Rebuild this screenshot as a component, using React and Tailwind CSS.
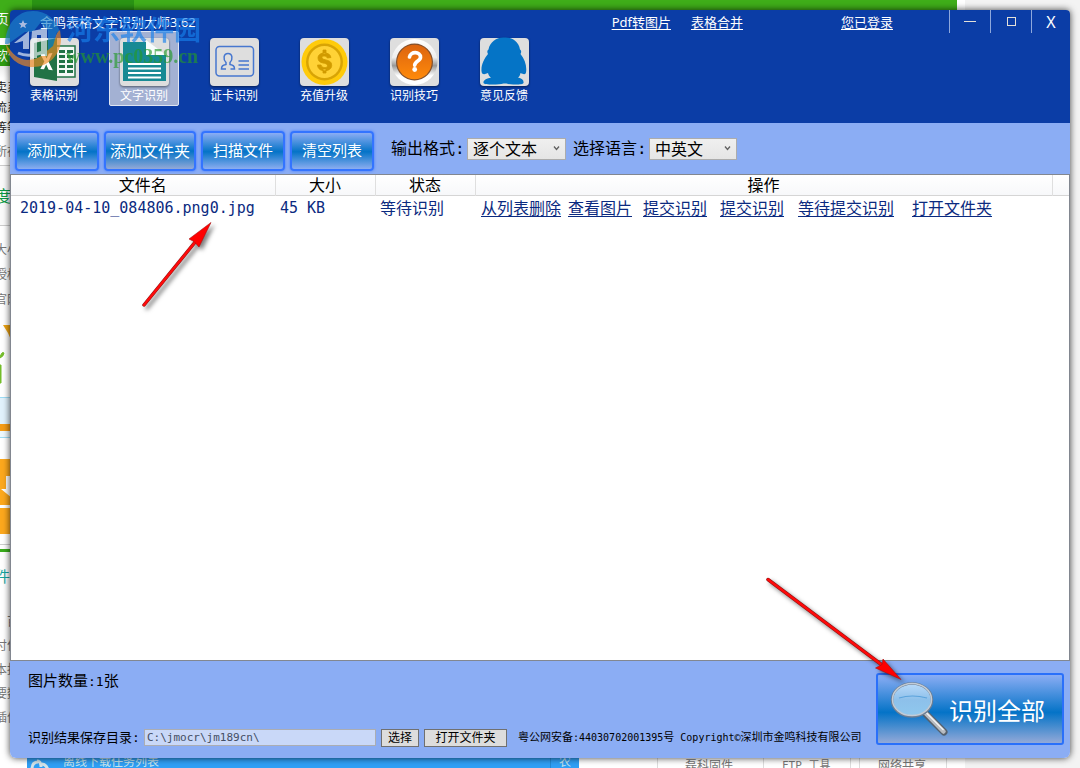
import React from "react";

const SANS = "font-['Noto_Sans','Noto_Sans_CJK_SC',sans-serif]";
const MONO = "font-['DejaVu_Sans_Mono','Noto_Sans_CJK_SC',monospace]";

function IconTile({ children }) {
  return (
    <svg viewBox="0 0 49 48" className="h-12 w-[49px] shrink-0 overflow-visible drop-shadow-[0_1px_1px_rgba(0,0,0,0.5)]" aria-hidden="true">
      <rect x="0" y="0" width="49" height="48" rx="4" fill="#dedede" />
      {children}
    </svg>
  );
}

function ExcelIcon() {
  return (
    <IconTile>
      <rect x="26" y="8" width="19" height="31" fill="#f4f8f5" stroke="#217346" strokeWidth="1.5" />
      {[12, 17, 22, 27, 32].map((y) => (
        <g key={y} fill="#217346">
          <rect x="29" y={y} width="6" height="3" />
          <rect x="37" y={y} width="6" height="3" />
        </g>
      ))}
      <path d="M4 5 27 0V43L4 39Z" fill="#217346" />
      <path d="M10.500 16.500l4-.5 2 4.500 2.300-5 3.700-.4-4 8.400 4.300 8.700-4.200-.4-2.400-5.400-2.200 4.900-3.700-.4 4-7.500z" fill="#fff" />
    </IconTile>
  );
}

function DocumentIcon() {
  return (
    <IconTile>
      <path d="M3 4H26V17H46V43H3Z" fill="#188a94" />
      <path d="M26 2 46 17H26Z" fill="#f8fdfd" />
      <path d="M8 26H41M8 30.500H41M8 35H41M8 39.500H41" stroke="#fff" strokeWidth="2" />
    </IconTile>
  );
}

function CardIcon() {
  return (
    <IconTile>
      <g fill="none" stroke="#4777cf" strokeWidth="1.500">
        <rect x="6" y="8.500" width="37.500" height="29.500" rx="3.500" />
        <path d="M16 31h-4.500c0-3 1.200-3.700 4.500-4.500v-2c-3-3-2.700-9 2-9s5 6 2 9v2c3.300.8 4.500 1.500 4.500 4.500h-4" />
        <path d="M28.500 23H39M28.500 27H39M28.500 31H39" />
      </g>
    </IconTile>
  );
}

function CoinIcon() {
  return (
    <IconTile>
      <circle cx="24.500" cy="24" r="23" fill="#ffcb0b" />
      <circle cx="24.500" cy="24" r="18.500" fill="#d8a405" />
      <circle cx="24.500" cy="24" r="16" fill="#ffd236" />
      <path d="M31 19.500c-.7-3.200-3-4.500-6.500-4.500s-6.500 1.700-6.500 5c0 6.800 9.500 3.800 9.500 7.700 0 2.700-5.800 2.500-6.500-.7h-3.500c.3 4 3.200 5.700 7 5.700 4.200 0 7.200-1.900 7.200-5.500 0-6.700-9.700-4.200-9.700-7.700 0-2 4.700-2 5.300.5zM23 12h3v4h-3zM23 31h3v4h-3z" fill="#d19b00" stroke="#d19b00" strokeWidth=".8" />
    </IconTile>
  );
}

function HelpIcon() {
  return (
    <IconTile>
      <defs>
        <linearGradient id="help-ring" x1="0" x2="0" y1="0" y2="1">
          <stop offset="0" stopColor="#fff" />
          <stop offset=".4" stopColor="#eee" />
          <stop offset=".58" stopColor="#999" />
          <stop offset=".8" stopColor="#fff" />
        </linearGradient>
        <linearGradient id="help-face" x1="0" x2="0" y1="0" y2="1">
          <stop offset="0" stopColor="#dc6410" />
          <stop offset="1" stopColor="#ff8a0a" />
        </linearGradient>
      </defs>
      <circle cx="24.500" cy="24" r="23" fill="url(#help-ring)" />
      <circle cx="24.500" cy="24" r="18.500" fill="#83502c" />
      <circle cx="24.500" cy="24" r="17.300" fill="url(#help-face)" />
      <path d="M19.500 19c1-6 11-5.500 11 .2 0 4-5.500 3.600-5.800 8" fill="none" stroke="#fff" strokeWidth="3.700" strokeLinecap="round" />
      <circle cx="24.700" cy="31.500" r="2.400" fill="#fff" />
    </IconTile>
  );
}

function PenguinIcon() {
  return (
    <IconTile>
      <path d="M24.500-.5C17-1 10 3.500 8.500 11.500c-1.500 1-1.500 3-.5 4.500C4 21 1 27 1.500 33c.2 3.500 2.500 4 6.500 2 .5 2 1.500 3.500 3 4.500-4 1-8 2.500-7.500 5.500.5 2 15 2 20 .5h3c5 1.500 16.500 1.500 17-.5.500-3-1.500-4.500-5.500-5.500 1.500-1 2-2.500 2.500-4.500 4 2 5.500 1.500 5.700-2 .5-6-1.700-12-5.700-17 1-1.500 1-3.500-.5-4.500C39 3.500 32-1 24.500-.5Z" fill="#0574c6" />
    </IconTile>
  );
}

const TOOLS = [
  { label: "表格识别", Icon: ExcelIcon },
  { label: "文字识别", Icon: DocumentIcon, active: true },
  { label: "证卡识别", Icon: CardIcon },
  { label: "充值升级", Icon: CoinIcon },
  { label: "识别技巧", Icon: HelpIcon },
  { label: "意见反馈", Icon: PenguinIcon },
];

function Header() {
  return (
    <header className="h-[113px] shrink-0 rounded-t-[4px] bg-[#0b3da6] text-white">
      <div className="flex h-[21px] items-start text-[13px] leading-6">
        <h1 className="flex-1 pl-[30px] text-[13px] font-normal">金鸣表格文字识别大师3.62</h1>
        <nav className="flex">
          <a href="#pdf" className="mr-5 underline underline-offset-2">Pdf转图片</a>
          <a href="#merge" className="mr-[98px] underline underline-offset-2">表格合并</a>
          <a href="#account" className="mr-14 underline underline-offset-2">您已登录</a>
        </nav>
        <div className="flex h-[23px] shrink-0">
          <button aria-label="最小化" className="flex w-[41px] items-center justify-center border-l border-[#8ea8dc]">
            <span className="h-px w-3 bg-[#e4e0d8]" />
          </button>
          <button aria-label="最大化" className="flex w-[41px] items-center justify-center border-l border-[#8ea8dc]">
            <span className="size-[9px] border border-[#e4e0d8]" />
          </button>
          <button aria-label="关闭" className="w-[39px] border-l border-[#8ea8dc] text-[16px] leading-6">X</button>
        </div>
      </div>
      <div className="flex gap-5 pl-[9px]">
        {TOOLS.map(({ label, Icon, active }) => (
          <button
            key={label}
            className={
              active
                ? "flex h-[75px] w-[70px] flex-col items-center rounded-[2px] border border-[#dfe5f2] bg-[#a3b1d3] pt-1.5 text-[12px] leading-5"
                : "flex h-[75px] w-[70px] flex-col items-center border border-transparent pt-1.5 text-[12px] leading-5"
            }
          >
            <Icon />
            {label}
          </button>
        ))}
      </div>
    </header>
  );
}

function Toolbar() {
  const glossy = "h-10 rounded-[4px] border-2 border-[#3374ff] text-white shadow-[0_0_3px_#3c78ff]";
  return (
    <div className="flex h-[51px] shrink-0 items-center bg-[#8badf4] pl-[5px] text-[16px]">
      <div className="flex gap-[5px] pt-1 text-[15px]">
        <button className={`${glossy} w-[84px] bg-[linear-gradient(#8badf4,#0473c7_52%,#8badf0)]`}>添加文件</button>
        <button className={`${glossy} w-[92px] bg-[linear-gradient(#8badf4,#0473c7_50%,#93a9d8)] text-[16px]`}>添加文件夹</button>
        <button className={`${glossy} w-[84px] bg-[linear-gradient(#8badf4,#0473c7_52%,#8badf0)]`}>扫描文件</button>
        <button className={`${glossy} w-[84px] bg-[linear-gradient(#8badf4,#0473c7_52%,#8badf0)]`}>清空列表</button>
      </div>
      <Picker id="format" label="输出格式" value="逐个文本" width="w-[99px]" />
      <Picker id="language" label="选择语言" value="中英文" width="w-[88px]" narrow />
    </div>
  );
}

function Picker({ id, label, value, width, narrow }) {
  return (
    <div className={narrow ? "flex items-center pl-[7px]" : "flex items-center pl-[17px]"}>
      <label htmlFor={id} className="w-[76px] whitespace-nowrap text-black">
        {label}<span className={MONO}>:</span>
      </label>
      <div className="relative">
        <select id={id} className={`${width} block h-[22px] appearance-none border border-[#acacac] bg-linear-to-b from-[#efefef] to-[#e5e5e5] pl-[5px] text-[16px] leading-5 text-black`}>
          <option>{value}</option>
        </select>
        <svg viewBox="0 0 7 5" className="pointer-events-none absolute top-2 right-1.5 h-[5px] w-[7px]" aria-hidden="true">
          <path d="M1 .5 3.500 3.500 6 .5" fill="none" stroke="#606060" strokeWidth="1.300" />
        </svg>
      </div>
    </div>
  );
}

const ACTIONS = ["从列表删除", "查看图片", "提交识别", "提交识别", "等待提交识别", "打开文件夹"];

function FileTable() {
  const head = "h-5 border-r border-[#dfdfdf] p-0 text-center font-normal";
  return (
    <main className="min-h-0 flex-1 border border-[#828790] bg-white">
      <table className="w-full table-fixed border-collapse text-[16px] leading-5 text-black">
        <colgroup>
          <col className="w-[264px]" />
          <col className="w-[100px]" />
          <col className="w-[100px]" />
          <col />
          <col className="w-[17px]" />
        </colgroup>
        <thead>
          <tr className="border-b border-[#d5d5d5] bg-linear-to-b from-white to-[#f7f8fa]">
            <th className={head}>文件名</th>
            <th className={head}>大小</th>
            <th className={head}>状态</th>
            <th className={head}>操作</th>
            <th className="p-0" aria-label="空列" />
          </tr>
        </thead>
        <tbody className="text-[#0b2a80]">
          <tr className="h-6">
            <td className={`${MONO} p-0 pl-[9px] text-[15px]`}>2019-04-10_084806.png0.jpg</td>
            <td className={`${MONO} p-0 pl-[5px] text-[15px]`}>45 KB</td>
            <td className="p-0 pl-[5px]">等待识别</td>
            <td className="p-0 pl-1.5" colSpan={2}>
              <div className="grid grid-cols-[87px_75px_77px_78px_114px_80px]">
                {ACTIONS.map((text, i) => (
                  <a key={i} href="#action" className="whitespace-nowrap underline underline-offset-2">{text}</a>
                ))}
              </div>
            </td>
          </tr>
        </tbody>
      </table>
    </main>
  );
}

function Magnifier() {
  return (
    <svg viewBox="0 0 60 58" className="h-[58px] w-[60px] shrink-0" aria-hidden="true">
      <defs>
        <linearGradient id="lens" x1="0" x2="0" y1="0" y2="1">
          <stop offset="0" stopColor="#b9dafa" />
          <stop offset=".5" stopColor="#8dc0ea" />
          <stop offset="1" stopColor="#8fc9ee" />
        </linearGradient>
      </defs>
      <path d="M37 34 55 52" stroke="#55606c" strokeWidth="7" strokeLinecap="round" />
      <path d="M36.500 33 54.500 51.500" stroke="#b7bbc0" strokeWidth="4.500" strokeLinecap="round" />
      <path d="M37.500 33 54.500 50" stroke="#f5f5f5" strokeWidth="1.300" />
      <ellipse cx="23" cy="20" rx="20" ry="16.500" fill="url(#lens)" stroke="#6d7f94" strokeWidth="2.500" />
      <ellipse cx="23" cy="19.500" rx="19.500" ry="16" fill="none" stroke="#c3ccd6" strokeWidth="1.500" />
      <path d="M10 18q13-4 28 0" fill="none" stroke="#5ba3dc" strokeWidth="1.200" />
    </svg>
  );
}

function Footer() {
  const plain = "h-[18px] border border-[#707070] bg-[#dddddd] text-[12px] leading-4";
  return (
    <footer className="flex h-[97px] shrink-0 rounded-b-[6px] bg-[#8badf4] text-black">
      <div className="flex min-w-0 flex-1 flex-col justify-between pt-[7px] pb-2 pl-[18px]">
        <p className="text-[15px] leading-6">
          图片数量<span className={`${MONO} text-[13px]`}>:1</span>张
        </p>
        <div className="flex items-center whitespace-nowrap text-[13px] leading-6">
          <label htmlFor="folder" className="w-[116px]">识别结果保存目录<span className={MONO}>:</span></label>
          <input id="folder" defaultValue="C:\jmocr\jm189cn\" className={`${MONO} h-[17px] w-[232px] border border-[#abadb3] bg-[#c9d8f8] pl-0.5 text-[11px] text-[#444e64]`} />
          <button className={`${plain} ml-[5px] w-[38px]`}>选择</button>
          <button className={`${plain} ml-[5px] w-[83px]`}>打开文件夹</button>
          <p className="pl-[11px] text-[11px]">
            粤公网安备<span className={`${MONO} text-[10px]`}>:44030702001395</span>号
            <span className={`${MONO} text-[10px] whitespace-pre`}> Copyright©</span>深圳市金鸣科技有限公司
          </p>
        </div>
      </div>
      <button className="mt-3 mr-1.5 flex h-[72px] w-[188px] shrink-0 items-center rounded-[3px] border-2 border-[#2a70fa] bg-[linear-gradient(#8badf4,#0473c7_55%,#93a9d8)] pl-[11px] text-[24px] text-white">
        <Magnifier />
        <span className="whitespace-nowrap pt-1">识别全部</span>
      </button>
    </footer>
  );
}

const SIDE_ROWS = [
  { box: "h-[38px] bg-[#3fae19] pt-[9px] text-[14px] text-white", text: "页" },
  { box: "h-[7px] bg-white" },
  { box: "h-[21px] bg-[#2f9d12] text-[13px] text-white", text: "软件" },
  { box: "h-[12px] bg-linear-to-b from-[#ededed] to-white" },
  { box: "h-5 text-[12px] text-[#222]", text: "卖系" },
  { box: "h-5 text-[12px] text-[#222]", text: "流系" },
  { box: "h-6 text-[12px] text-[#222]", text: "等等" },
  { box: "h-6 border-b border-[#ccc] text-[12px] text-[#777]", text: "所在" },
  { box: "h-[60px] border-b border-[#ccc] bg-[#fafafa] pt-5 text-[16px] text-[#0b9a45]", text: "度网" },
  { box: "h-[14px]" },
  { box: "h-[25px] text-[12px] text-[#777]", text: "大小" },
  { box: "h-[25px] text-[12px] text-[#777]", text: "授权" },
  { box: "h-[25px] text-[12px] text-[#777]", text: "官网" },
];

const LOWER_ROWS = [
  { box: "h-[27px] border-t border-[#9ddcf5] bg-[#e1f2fc]" },
  { box: "h-[7px] bg-[#f59c16]" },
  { box: "h-[7px] border-b border-[#9ddcf5] bg-[#eef8fd]" },
  { box: "h-[18px]" },
];

function SideRow({ box, text }) {
  return (
    <div className={`${box} shrink-0 leading-5`}>
      {text && <span className="-ml-[5px] block whitespace-nowrap">{text}</span>}
    </div>
  );
}

function Backdrop() {
  return (
    <div className="absolute inset-0 flex overflow-hidden bg-[#f3f3f3]" aria-hidden="true">
      <div className="flex w-[965px] flex-col bg-white">
        <div className="flex flex-1 items-start">
          <div className="flex w-8 shrink-0 flex-col">
            {SIDE_ROWS.map((row, i) => <SideRow key={i} {...row} />)}
            <svg viewBox="0 0 12 82" className="h-[82px] w-3 shrink-0">
              <path d="M3 10h9v17l-4-9z" fill="#eda313" />
              <path d="M0 42q2-6 4-4 0 3-4 5zM0 50h1v18h-1z" fill="#75bd2b" stroke="#75bd2b" />
            </svg>
            {LOWER_ROWS.map((row, i) => <SideRow key={i} {...row} />)}
            <svg viewBox="0 0 12 78" className="h-[78px] w-3 shrink-0">
              <path d="M0 3h12v75H0z" fill="#fca81d" />
              <path d="M0 49h12v3H0zM6 20h6v22L1 33h5z" fill="#fff" />
            </svg>
            <div className="h-[18px] shrink-0 border-b-[3px] border-[#3aad1c] pt-[10px]"><div className="h-px bg-[#ccc]" /></div>
            <SideRow box="h-[60px] pt-[14px] text-[15px] text-[#16a5a0]" text="件" />
            <SideRow box="h-6 pl-3 text-[12px] text-[#777]" text="百" />
            <SideRow box="h-6 text-[12px] text-[#777]" text="付作" />
            <SideRow box="h-6 text-[12px] text-[#777]" text="本报" />
            <SideRow box="h-6 text-[12px] text-[#777]" text="要数" />
            <SideRow box="h-6 text-[12px] text-[#777]" text="插件" />
          </div>
          <div className="h-[38px] w-[102px] bg-[#2a9414]" />
          <div className="mr-2 h-[38px] flex-1 bg-[#3fae19]" />
        </div>
      </div>
      <div className="absolute bottom-0 left-[27px] flex h-3 text-[12px] leading-4 text-[#777]">
        <div className="flex h-3 w-[552px] shrink-0 items-center gap-3 overflow-hidden bg-[#2f9ff5] text-[#c8e6ee]">
          <svg viewBox="0 0 24 12" className="h-3 w-6">
            <path d="M5 13q0-7 6-7M10 5q4 0 4 6M15 8q4 0 6 6" fill="none" stroke="#d4e4ea" strokeWidth="3" />
          </svg>
          <span className="flex-1">离线下载任务列表</span>
          <span className="border-l border-[#2389d4] px-2">农</span>
        </div>
        <div className="ml-[68px] flex h-3 gap-2 pl-2.5 leading-5">
          <span className="w-[98px] border-l border-[#ddd] pl-[27px] whitespace-nowrap">磊科固件</span>
          <span className={`${MONO} w-[88px] border-x border-[#ddd] pl-[18px] text-[11px] whitespace-nowrap`}>FTP 工具</span>
          <span className="w-[88px] border-x border-[#ddd] pl-[18px] whitespace-nowrap">网络共享</span>
        </div>
      </div>
    </div>
  );
}

function Watermark() {
  return (
    <div className="pointer-events-none absolute top-[10px] left-[5px] flex opacity-65">
      <svg viewBox="0 0 58 58" className="h-[58px] w-[58px]" aria-hidden="true">
        <path d="M0 34C1 14 12 1 28 1c13 0 24 8 27 22L42 20 36 12 28 22H20L3 34Z" fill="#1c82cc" />
        <path d="M1 34c1 13 12 23 27 23 16 0 28-13 28-28l-1-9c-5 4-5 10-10 17-6 9-14 13-23 13-9-1-15-6-21-16z" fill="#f28b20" />
        <path d="M9 33 24 21v18h-6v-8l-7 2zM27 21l15-3v28h-6V25h-4v23h-6V33z" fill="#f0f5f9" />
        <path d="M13 43q11 5 25-1" fill="none" stroke="#f0f5f9" strokeWidth="3" />
        <path d="M43 18l9 4-4 14-5 4z" fill="#1c82cc" />
        <path d="m18 10 1.300 3 3.200.2-2.500 2 1 3-3-1.700-2.700 1.700.8-3-2.400-2 3-.2z" fill="#fff" />
      </svg>
      <div className="flex flex-col pl-[3px]">
        <span className="text-[27px] leading-[40px] font-bold whitespace-nowrap text-[#1680ec]">河东软件园</span>
        <span className="-mt-1 font-['Liberation_Serif',serif] text-[20px] leading-5 font-bold text-[#259a2a]">www.pc0359.cn</span>
      </div>
    </div>
  );
}

function Arrows() {
  return (
    <>
      <svg viewBox="140 218 76 92" className="pointer-events-none absolute top-[218px] left-[140px] h-[92px] w-[76px] overflow-visible drop-shadow-[3px_3px_2px_rgba(0,0,0,0.5)]" aria-hidden="true">
        <path d="M144 305 196 241" stroke="#8f1515" strokeWidth="3.500" strokeLinecap="round" />
        <path d="M144 305 196 241" stroke="#ff0a0a" strokeWidth="2.400" strokeLinecap="round" />
        <path d="M211 222.500 189 239l5 2.500 5 5.500z" fill="#ff0000" stroke="#a21111" strokeWidth=".6" />
      </svg>
      <svg viewBox="764 575 140 108" className="pointer-events-none absolute right-[176px] bottom-[85px] h-[108px] w-[140px] overflow-visible drop-shadow-[3px_3px_2px_rgba(0,0,0,0.5)]" aria-hidden="true">
        <path d="M768 579.500 882 665" stroke="#8f1515" strokeWidth="3.500" strokeLinecap="round" />
        <path d="M768 579.500 882 665" stroke="#ff0a0a" strokeWidth="2.400" strokeLinecap="round" />
        <path d="M901 679.500 883 659l-1 5.500-6.500 3.500z" fill="#ff0000" stroke="#a21111" strokeWidth=".6" />
      </svg>
    </>
  );
}

export default function App() {
  return (
    <div className={`${SANS} relative flex h-screen min-h-[400px] flex-col overflow-hidden p-[10px]`}>
      <Backdrop />
      <div className="relative flex min-h-0 flex-1 flex-col rounded-t-[4px] rounded-b-[6px] shadow-[0_0_7px_rgba(0,0,0,0.75)]">
        <Header />
        <Toolbar />
        <FileTable />
        <Footer />
      </div>
      <Watermark />
      <Arrows />
    </div>
  );
}
